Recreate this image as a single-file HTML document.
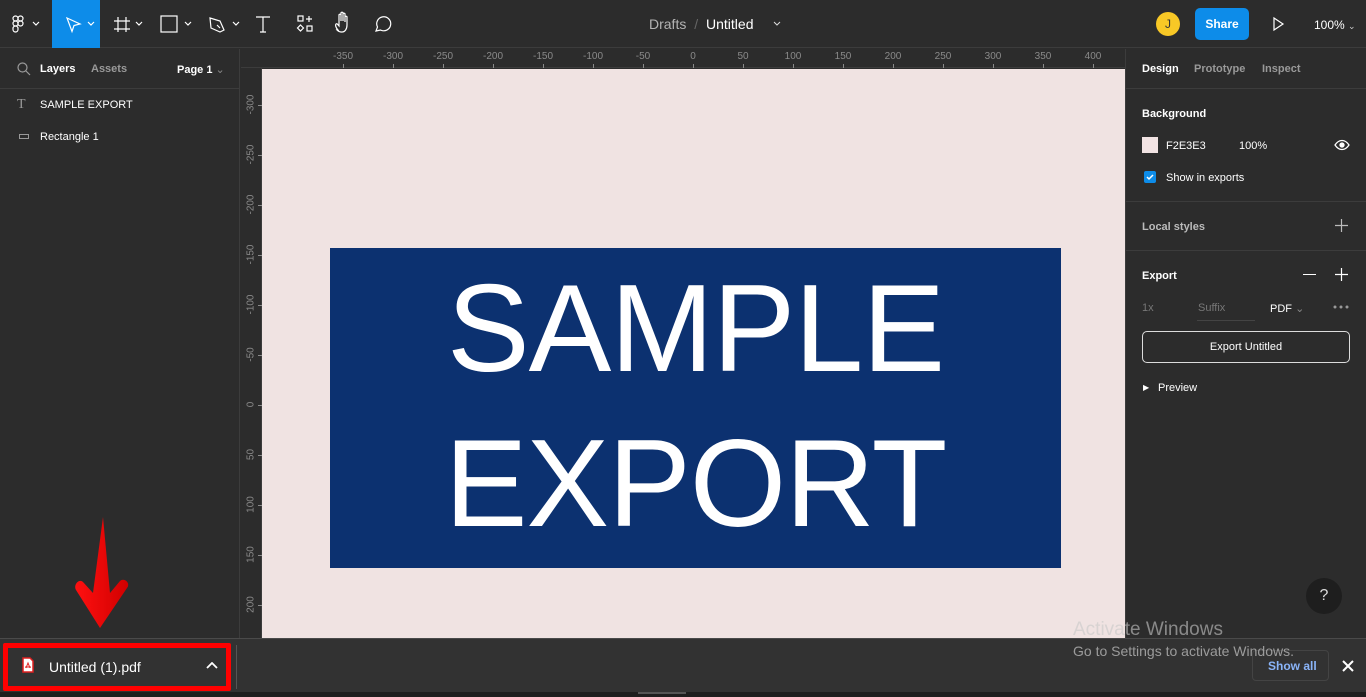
<!DOCTYPE html>
<html><head><meta charset="utf-8"><style>
*{margin:0;padding:0;box-sizing:border-box}
body{width:1366px;height:697px;overflow:hidden;background:#2c2c2c;font-family:"Liberation Sans",sans-serif;color:#fff;position:relative}
.a{position:absolute}
.t{font-size:11px;font-weight:bold}
.rl{position:absolute;font-size:10px;color:#8a8a8a}
.tk{position:absolute;background:#8a8a8a}
</style></head><body>
<div class="a" style="left:0;top:0;width:1366px;height:48px;background:#2c2c2c;border-bottom:1px solid #3c3c3c"></div>
<div class="a" style="left:52px;top:0;width:48px;height:48px;background:#0d8ce9"></div>
<svg class="a" style="left:0;top:0" width="400" height="48" fill="none" stroke="#fff" stroke-width="1.2">
<g transform="translate(13,16)"><rect x="0" y="0" width="5" height="5" rx="2.5"/><rect x="5" y="0" width="5" height="5" rx="2.5"/><rect x="0" y="5" width="5" height="5" rx="2.5"/><circle cx="7.5" cy="7.5" r="2.5"/><rect x="0" y="10" width="5" height="6" rx="2.5"/></g>
<path d="M33 22l3 3 3-3M88 22l3 3 3-3M136 22l3 3 3-3M185 22l3 3 3-3M233 22l3 3 3-3"/>
<path d="M67 18l13 6-6 1.5-2 6z"/>
<path d="M118 17v15M126 17v15M114 21h16M114 29h16"/>
<rect x="161" y="16" width="16" height="16"/>
<path d="M210 18l10 3 4 9-4 2-9-4zM220 28l-3-3"/>
<path d="M256 17h14M263 17v15M260 32h6"/>
<rect x="298" y="16" width="5" height="5"/><path d="M309 16v6M306 19h6"/><path d="M300.5 25l3 3-3 3-3-3z"/><rect x="307" y="26" width="5" height="5"/>
<path d="M338 30c-2-2-3-5-2-6s2 1 3 2v-11c0-1 2-1 2 0v6-8c0-1 2-1 2 0v8-7c0-1 2-1 2 0v8-5c0-1 2-1 2 0v8c0 4-2 7-5 7h-1c-2 0-3-1-4-2z"/>
<path d="M376 31l1.5-4a7 7 0 1 1 3 3z"/>
</svg>
<div class="a" style="left:649px;top:16px;font-size:14px;color:#b3b3b3">Drafts <span style="color:#666;margin:0 4px">/</span> <span style="color:#fff">Untitled</span></div>
<svg class="a" style="left:772px;top:20px" width="10" height="8" fill="none" stroke="#ddd"><path d="M2 2l3 3 3-3"/></svg>
<div class="a" style="left:1156px;top:12px;width:24px;height:24px;border-radius:12px;background:#f8c826;color:#333;font-size:12px;text-align:center;line-height:24px">J</div>
<div class="a" style="left:1195px;top:8px;width:54px;height:32px;border-radius:5px;background:#0d8ce9;font-size:12px;font-weight:bold;text-align:center;line-height:32px">Share</div>
<svg class="a" style="left:1270px;top:16px" width="16" height="16" fill="none" stroke="#fff" stroke-width="1.2"><path d="M4 2l9 6-9 6z"/></svg>
<div class="a t" style="left:1314px;top:18px;font-weight:normal;font-size:12px">100% <span style="font-size:9px;color:#ccc">⌄</span></div>
<div class="a" style="left:0;top:49px;width:240px;height:589px;background:#2c2c2c;border-right:1px solid #3c3c3c"></div>
<div class="a" style="left:0;top:88px;width:240px;height:1px;background:#3c3c3c"></div>
<svg class="a" style="left:17px;top:62px" width="14" height="14" fill="none" stroke="#999" stroke-width="1.2"><circle cx="5.5" cy="5.5" r="4.5"/><path d="M9 9l4 4"/></svg>
<div class="a t" style="left:40px;top:63px">Layers</div>
<div class="a t" style="left:91px;top:63px;color:#999">Assets</div>
<div class="a t" style="left:177px;top:63px">Page 1 <span style="color:#888;font-weight:normal">⌄</span></div>
<div class="a" style="left:17px;top:97px;font-size:14px;color:#999;font-family:'Liberation Serif',serif">T</div>
<div class="a t" style="left:40px;top:99px;font-weight:normal">SAMPLE EXPORT</div>
<div class="a" style="left:19px;top:134px;width:10px;height:5px;border:1px solid #999"></div>
<div class="a t" style="left:40px;top:131px;font-weight:normal">Rectangle 1</div>
<div class="a" style="left:241px;top:49px;width:884px;height:19px;background:#2c2c2c;border-bottom:1px solid #3c3c3c"></div>
<div class="a" style="left:241px;top:68px;width:21px;height:570px;background:#2c2c2c;border-right:1px solid #3c3c3c"></div>
<div id="tr"></div>
<div class="a" style="left:262px;top:69px;width:863px;height:569px;background:#f0e3e2"></div>
<div class="a" style="left:330px;top:248px;width:731px;height:320px;background:#0c3170"></div>
<div class="a" style="left:330px;top:252px;width:731px;text-align:center;font-size:124px;line-height:155px;color:#fff;letter-spacing:-1px">SAMPLE<br>EXPORT</div>
<div class="a" style="left:1125px;top:49px;width:241px;height:589px;background:#2c2c2c;border-left:1px solid #3c3c3c"></div>
<div class="a" style="left:1126px;top:88px;width:240px;height:1px;background:#3c3c3c"></div>
<div class="a" style="left:1126px;top:201px;width:240px;height:1px;background:#3c3c3c"></div>
<div class="a" style="left:1126px;top:250px;width:240px;height:1px;background:#3c3c3c"></div>
<div class="a t" style="left:1142px;top:63px">Design</div>
<div class="a t" style="left:1194px;top:63px;color:#999">Prototype</div>
<div class="a t" style="left:1262px;top:63px;color:#999">Inspect</div>
<div class="a t" style="left:1142px;top:108px">Background</div>
<div class="a" style="left:1142px;top:137px;width:16px;height:16px;background:#f2e3e3"></div>
<div class="a t" style="left:1166px;top:140px;font-weight:normal">F2E3E3</div>
<div class="a t" style="left:1239px;top:140px;font-weight:normal">100%</div>
<svg class="a" style="left:1334px;top:139px" width="16" height="12" fill="none" stroke="#fff" stroke-width="1.3"><path d="M1 6c4-6 10-6 14 0c-4 6-10 6-14 0z"/><circle cx="8" cy="6" r="2" fill="#fff"/></svg>
<div class="a" style="left:1144px;top:171px;width:12px;height:12px;border-radius:2px;background:#0d8ce9"></div>
<svg class="a" style="left:1144px;top:171px" width="12" height="12" fill="none" stroke="#fff" stroke-width="1.5"><path d="M3 6l2 2 4-4"/></svg>
<div class="a t" style="left:1166px;top:172px;font-weight:normal">Show in exports</div>
<div class="a t" style="left:1142px;top:221px;color:#bbb">Local styles</div>
<svg class="a" style="left:1335px;top:219px" width="13" height="13" stroke="#bbb" stroke-width="1.2"><path d="M6.5 0v13M0 6.5h13"/></svg>
<div class="a t" style="left:1142px;top:270px">Export</div>
<div class="a" style="left:1303px;top:274px;width:13px;height:1px;background:#fff"></div>
<svg class="a" style="left:1335px;top:268px" width="13" height="13" stroke="#fff" stroke-width="1.2"><path d="M6.5 0v13M0 6.5h13"/></svg>
<div class="a t" style="left:1142px;top:302px;color:#777;font-weight:normal">1x</div>
<div class="a t" style="left:1198px;top:302px;color:#777;font-weight:normal">Suffix</div>
<div class="a" style="left:1197px;top:320px;width:58px;height:1px;background:#444"></div>
<div class="a t" style="left:1270px;top:302px;font-weight:normal">PDF <span style="color:#888">⌄</span></div>
<svg class="a" style="left:1333px;top:305px" width="16" height="4" fill="#999"><circle cx="2" cy="2" r="1.5"/><circle cx="8" cy="2" r="1.5"/><circle cx="14" cy="2" r="1.5"/></svg>
<div class="a" style="left:1142px;top:331px;width:208px;height:32px;border:1px solid #ddd;border-radius:5px;text-align:center;line-height:30px;font-size:11px">Export Untitled</div>
<div class="a" style="left:1143px;top:383px;font-size:8px">▶</div>
<div class="a t" style="left:1158px;top:382px;font-weight:normal">Preview</div>
<div class="a" style="left:1306px;top:578px;width:36px;height:36px;border-radius:18px;background:#1e1e1e;color:#ddd;text-align:center;line-height:36px;font-size:16px">?</div>
<div class="a" style="left:0;top:638px;width:1366px;height:54px;background:#323232;border-top:1px solid #4a4a4a"></div>
<div class="a" style="left:0;top:692px;width:1366px;height:5px;background:#1e1e1e"></div>
<div class="a" style="left:638px;top:692px;width:48px;height:2px;background:#555"></div>
<div class="a" style="left:3px;top:643px;width:228px;height:48px;border:5px solid #f00;border-radius:2px"></div>
<div class="a" style="left:236px;top:645px;width:1px;height:44px;background:#555"></div>
<svg class="a" style="left:22px;top:657px" width="12" height="16"><path d="M1 1h7l3 3v11H1z" fill="#fff" stroke="#e02020" stroke-width="1.5"/><path d="M4 11l2-5 2 5M3 10h6" stroke="#e02020" fill="none"/></svg>
<div class="a" style="left:49px;top:659px;font-size:14px">Untitled (1).pdf</div>
<svg class="a" style="left:206px;top:662px" width="12" height="8" fill="none" stroke="#fff" stroke-width="1.8"><path d="M1 6l5-5 5 5"/></svg>
<div class="a" style="left:1252px;top:650px;width:77px;height:31px;border:1px solid #444;border-radius:4px"></div>
<div class="a t" style="left:1268px;top:659px;color:#8ab4f8;font-size:12px">Show all</div>
<svg class="a" style="left:1342px;top:660px" width="12" height="12" stroke="#fff" stroke-width="2"><path d="M1 1l10 10M11 1L1 11"/></svg>
<div class="a" style="left:1073px;top:619px;font-size:19px;color:rgba(200,200,200,.6)">Activate Windows</div>
<div class="a" style="left:1073px;top:643px;font-size:14px;color:rgba(200,200,200,.7)">Go to Settings to activate Windows.</div>
<svg class="a" style="left:70px;top:515px" width="62" height="115"><defs><linearGradient id="g" x1="0" x2="1"><stop offset="0" stop-color="#ff1010"/><stop offset="1" stop-color="#d00000"/></linearGradient></defs><path d="M33 2L40 78L50 66C54 62 61 68 57 73L30 113L6 75C3 70 9 63 13 67L23 78Z" fill="url(#g)"/></svg>
<script>
var h='';
for(var v=-350;v<=450;v+=50){var x=693+v;h+='<div class="rl" style="left:'+(x-15)+'px;top:51px;width:30px;text-align:center">'+(v<0?'-'+(-v):v)+'</div><div class="tk" style="left:'+x+'px;top:64px;width:1px;height:4px"></div>';}
for(var v=-300;v<=200;v+=50){var y=405+v;h+='<div class="rl" style="left:236px;top:'+(y-6)+'px;width:30px;text-align:center;transform:rotate(-90deg)">'+(v<0?'-'+(-v):v)+'</div><div class="tk" style="left:258px;top:'+y+'px;width:4px;height:1px"></div>';}
document.getElementById('tr').innerHTML=h;
</script>
</body></html>
